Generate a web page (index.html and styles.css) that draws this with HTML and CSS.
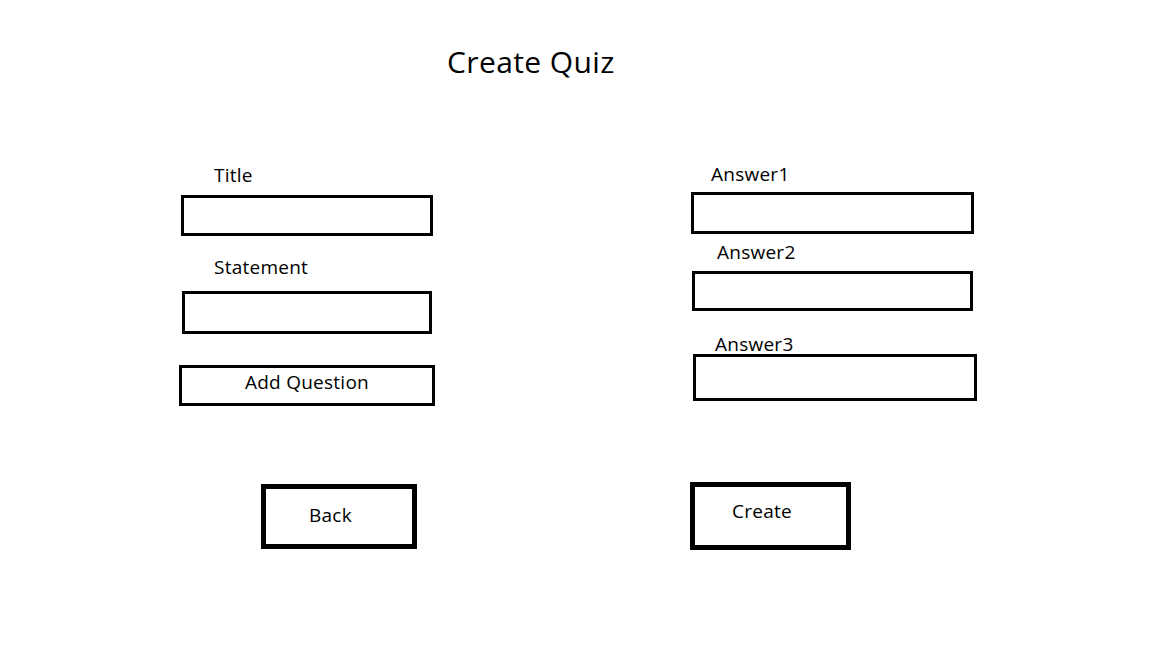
FILE: index.html
```html
<!DOCTYPE html>
<html lang="en">
<head>
<meta charset="utf-8">
<title>Create Quiz</title>
<link rel="stylesheet" href="styles.css">
</head>
<body>
<div class="page">
  <h1 class="page-title">Create Quiz</h1>
  <div class="columns">
    <section class="col col-left">
      <label class="lbl lbl-title" for="title">Title</label>
      <input class="field field-title" id="title" type="text">
      <label class="lbl lbl-statement" for="statement">Statement</label>
      <input class="field field-statement" id="statement" type="text">
      <button class="btn btn-add" type="button">Add Question</button>
      <button class="btn btn-back" type="button">Back</button>
    </section>
    <section class="col col-right">
      <label class="lbl lbl-a1" for="a1">Answer1</label>
      <input class="field field-a1" id="a1" type="text">
      <label class="lbl lbl-a2" for="a2">Answer2</label>
      <input class="field field-a2" id="a2" type="text">
      <label class="lbl lbl-a3" for="a3">Answer3</label>
      <input class="field field-a3" id="a3" type="text">
      <button class="btn btn-create" type="button">Create</button>
    </section>
  </div>
</div>
</body>
</html>
```
FILE: styles.css
```css
html, body {
  margin: 0;
  padding: 0;
  background: #ffffff;
}
body {
  font-family: "Open Sans", "Noto Sans", "DejaVu Sans", sans-serif;
  color: #000000;
  width: 1152px;
  height: 648px;
  overflow: hidden;
}
.page {
  padding-top: 42px;
}
.page-title {
  margin: 0 0 0 447px;
  font-size: 30px;
  letter-spacing: 0.4px;
  font-weight: 400;
  line-height: 40px;
}
.columns {
  display: flex;
  margin-top: 68px;
  padding-left: 179px;
}
.col {
  display: flex;
  flex-direction: column;
  align-items: flex-start;
}
.col-left {
  width: 511px;
}
.lbl {
  display: block;
  font-size: 19px;
  letter-spacing: 0.25px;
  line-height: 20px;
}
.field {
  display: block;
  box-sizing: border-box;
  border: 3px solid #000;
  background: #fff;
  padding: 0;
  margin: 0;
  outline: none;
  font: inherit;
}
.btn {
  display: block;
  box-sizing: border-box;
  background: #fff;
  color: #000;
  font-family: inherit;
  font-size: 19px;
  letter-spacing: 0.25px;
  line-height: 20px;
  margin: 0;
  border: 3px solid #000;
  text-align: left;
}

/* left column */
.lbl-title { margin: 15px 0 0 35px; }
.field-title { margin: 10px 0 0 2px; width: 252px; height: 41px; }
.lbl-statement { margin: 21px 0 0 35px; }
.field-statement { margin: 14px 0 0 3px; width: 250px; height: 43px; }
.btn-add {
  margin: 31px 0 0 0;
  width: 256px;
  padding: 4px 0 11px;
  text-align: center;
}
.btn-back {
  margin: 78px 0 0 82px;
  width: 156px;
  border-width: 5px;
  padding: 16px 0 19px 43px;
}

/* right column */
.lbl-a1 { margin: 14px 0 0 21px; }
.field-a1 { margin: 8px 0 0 1px; width: 283px; height: 42px; }
.lbl-a2 { margin: 8px 0 0 27px; }
.field-a2 { margin: 9px 0 0 2px; width: 281px; height: 40px; }
.lbl-a3 { margin: 23px 0 0 25px; }
.field-a3 { margin: 0 0 0 3px; width: 284px; height: 47px; }
.btn-create {
  margin: 81px 0 0 0;
  width: 161px;
  border-width: 5px;
  padding: 14px 0 24px 37px;
}
```
